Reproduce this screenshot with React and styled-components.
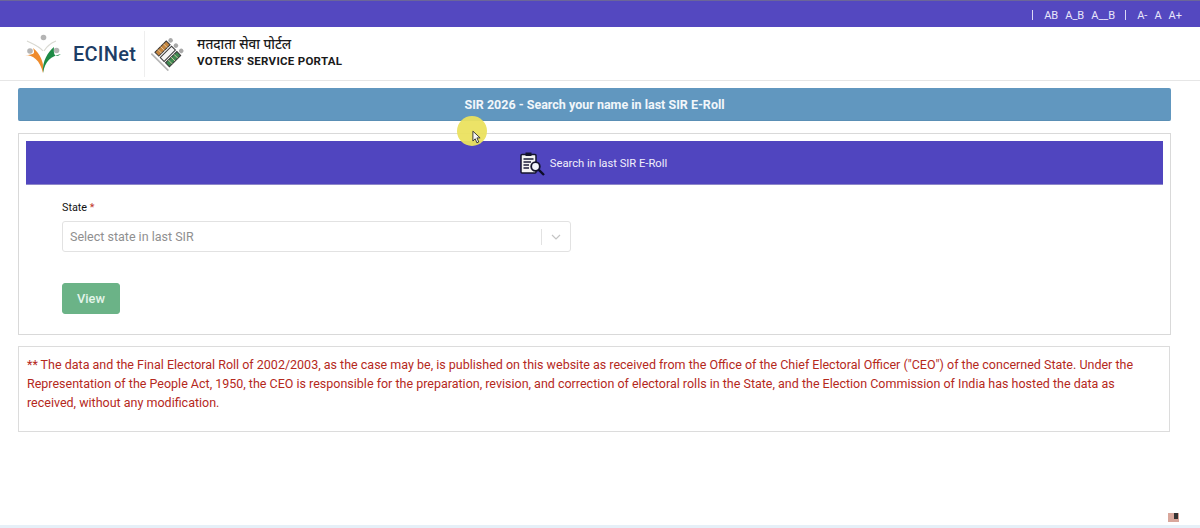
import React from "react"
import styled, { createGlobalStyle } from "styled-components"

const Global = createGlobalStyle`
  html, body { margin: 0; padding: 0; background: #fff; }
  body { font-family: Roboto, "Liberation Sans", sans-serif; overflow: hidden; }
  * { box-sizing: border-box; }
`

const Page = styled.div`
  position: relative;
  width: 1200px;
  height: 528px;
  overflow: hidden;
  background: #fff;
  display: flex;
  flex-direction: column;
`

const TopBar = styled.div`
  height: 27px;
  flex: none;
  background: #5448c0;
  border-top: 1px solid #6b6699;
  display: flex;
  align-items: center;
  justify-content: flex-end;
  padding: 2px 18px 0 0;
  color: #e8e6fa;
  font-size: 11px;
`

const BarSep = styled.span`
  width: 1px;
  height: 10px;
  background: #dcd9f5;
  margin: ${props => props.margin};
`

const BarItem = styled.span`
  margin-left: ${props => props.gap || 0}px;
  white-space: pre;
`

const Header = styled.header`
  height: 54px;
  flex: none;
  display: flex;
  align-items: center;
  border-bottom: 1px solid #e6e6e6;
  padding-left: 25px;
`

const BrandName = styled.span`
  font-size: 20px;
  font-weight: 500;
  letter-spacing: 0.25px;
  color: #1d3d66;
  margin-left: 10px;
`

const HeaderDivider = styled.span`
  width: 1px;
  height: 46px;
  background: #eeeeee;
  margin: 0 6px 0 8px;
`

const PortalText = styled.div`
  margin-left: 12px;
  padding-bottom: 3px;
  display: flex;
  flex-direction: column;
  gap: 2px;
  color: #1a1a1a;
`

const PortalHindi = styled.span`
  font-family: "Noto Sans", "Noto Sans Devanagari", "Lohit Devanagari", sans-serif;
  font-size: 13.5px;
  font-weight: 500;
  line-height: 16px;
`

const PortalEnglish = styled.span`
  font-size: 11.5px;
  font-weight: 700;
  letter-spacing: 0.27px;
  line-height: 14px;
`

const Content = styled.main`
  padding: 7px 29px 0 18px;
  display: flex;
  flex-direction: column;
`

const TitleBar = styled.div`
  height: 33px;
  background: #6197bf;
  border-radius: 2px;
  display: flex;
  align-items: center;
  justify-content: center;
  color: #f1f6fa;
  font-size: 12.5px;
  font-weight: 700;
  border-bottom: 1px solid #5a8fb5;
`

const Card = styled.section`
  margin-top: 12px;
  height: 202px;
  border: 1px solid #d9d9d9;
  padding: 7px 7px 0;
`

const CardHead = styled.div`
  height: 44px;
  background: #5045bf;
  border-bottom: 1px solid #8d87c9;
  display: flex;
  align-items: center;
  justify-content: center;
  color: #f0effb;
  font-size: 11.2px;
  font-weight: 400;
  gap: 5px;
  padding: 2px 2px 0 0;
`

const FormArea = styled.div`
  padding: 16px 0 0 36px;
`

const Label = styled.div`
  font-size: 10.8px;
  font-weight: 400;
  line-height: 14px;
  color: #111;
`

const Req = styled.span`
  color: #c0392b;
`

const SelectBox = styled.div`
  margin-top: 6px;
  width: 509px;
  height: 31px;
  border: 1px solid #e2e2e2;
  border-radius: 3px;
  display: flex;
  align-items: center;
  padding-left: 7px;
  color: #8f8f8f;
  font-size: 12.5px;
`

const SelectValue = styled.span`
  flex: 1;
`

const SelectSep = styled.span`
  width: 1px;
  height: 16px;
  background: #e2e2e2;
`

const SelectArrow = styled.span`
  width: 28px;
  display: flex;
  align-items: center;
  justify-content: center;
`

const ViewButton = styled.button`
  display: block;
  margin-top: 31px;
  width: 58px;
  height: 31px;
  border: 1px solid #6bb387;
  border-radius: 3px;
  background: #6bb387;
  color: #e4f5ea;
  font-family: inherit;
  font-size: 12.8px;
  font-weight: 500;
  padding: 0;
`

const Note = styled.section`
  margin-top: 11px;
  margin-right: 1px;
  height: 86px;
  border: 1px solid #dcdcdc;
  padding: 8px 8px 0;
  color: #b5291c;
  font-size: 12.5px;
  line-height: 19px;
`

const Cursor = styled.div`
  position: absolute;
  left: 457px;
  top: 116px;
  width: 30px;
  height: 30px;
  border-radius: 50%;
  background: #ebe25f;
  opacity: 0.95;
`

const CursorArrow = styled.svg`
  position: absolute;
  left: 15px;
  top: 14px;
`

const BottomStrip = styled.div`
  position: absolute;
  left: 0;
  right: 0;
  bottom: 0;
  height: 3px;
  background: #e6f0f8;
`

const TrayIcon = styled.svg`
  position: absolute;
  left: 1168px;
  top: 513px;
`

const EciNetLogo = () => (
  <svg width="38" height="40" viewBox="0 0 38 40">
    <circle cx="18.500" cy="3.500" r="2.800" fill="#b4b4b4" />
    <circle cx="5" cy="17" r="2.800" fill="#b4b4b4" />
    <circle cx="31.500" cy="16.500" r="2.800" fill="#b4b4b4" />
    <path d="M2 7 C8 10 14 12 18 17" stroke="#d9d9d2" strokeWidth="1.200" fill="none" />
    <path d="M31 7 C26 9 22 12 19 17" stroke="#d9d9d2" strokeWidth="1.200" fill="none" />
    <path d="M0 21 C8 21 15 26 18 39 C20 30 15 19 8 14 C10 19 10 21 0 21Z" fill="#ee8b2c" />
    <path d="M18 39 C20 27 26 22 36 20 C31 24 28 22 29 13 C23 18 17 27 18 39Z" fill="#1d8a45" />
  </svg>
)

const EciMark = () => (
  <svg width="34" height="34" viewBox="0 0 34 34">
    <g transform="rotate(45 17 17)">
      <rect x="6.500" y="9" width="5.500" height="16" fill="#c4853f" stroke="#3a3a3a" strokeWidth="1" />
      <rect x="14" y="9" width="5.500" height="16" fill="#f5f5f5" stroke="#3a3a3a" strokeWidth="1" />
      <rect x="21.500" y="9" width="5.500" height="16" fill="#3f8a52" stroke="#3a3a3a" strokeWidth="1" />
      <path d="M6.500 13H12M6.500 17H12M6.500 21H12M21.500 13H27M21.500 17H27M21.500 21H27" stroke="#e6d2b0" strokeWidth="0.800" />
      <circle cx="9.200" cy="5.500" r="2.300" fill="#a9a9a9" />
      <circle cx="16.700" cy="5.500" r="2.300" fill="#a9a9a9" />
      <circle cx="24.200" cy="5.500" r="2.300" fill="#a9a9a9" />
      <path d="M5 28.500H29" stroke="#b5b5b5" strokeWidth="1.600" />
    </g>
  </svg>
)

const SearchDocIcon = () => (
  <svg width="25" height="24" viewBox="0 0 25 24">
    <rect x="1" y="2.500" width="15" height="18.500" rx="1" fill="#f4f4f4" stroke="#14142e" strokeWidth="1.500" />
    <rect x="5.500" y="0.500" width="6" height="3.500" fill="#14142e" />
    <path d="M3.500 7H13.500M3.500 10H11M3.500 13H9M3.500 16H9" stroke="#1c1c3a" strokeWidth="1.300" />
    <circle cx="15.500" cy="14.500" r="4.300" fill="#f2f4fb" stroke="#14142e" strokeWidth="1.800" />
    <path d="M18.800 17.800L24 23" stroke="#0d0d28" strokeWidth="2.400" />
  </svg>
)

const App = () => (
  <Page>
    <Global />
    <TopBar>
      <BarSep margin="0 11px 0 0" />
      <BarItem>AB</BarItem>
      <BarItem gap={7}>A_B</BarItem>
      <BarItem gap={7}>A__B</BarItem>
      <BarSep margin="0 11px 0 10px" />
      <BarItem>A-</BarItem>
      <BarItem gap={7}>A</BarItem>
      <BarItem gap={7}>A+</BarItem>
    </TopBar>
    <Header>
      <EciNetLogo />
      <BrandName>ECINet</BrandName>
      <HeaderDivider />
      <EciMark />
      <PortalText>
        <PortalHindi lang="hi">मतदाता सेवा पोर्टल</PortalHindi>
        <PortalEnglish>VOTERS' SERVICE PORTAL</PortalEnglish>
      </PortalText>
    </Header>
    <Content>
      <TitleBar>SIR 2026 - Search your name in last SIR E-Roll</TitleBar>
      <Card>
        <CardHead>
          <SearchDocIcon />
          <span>Search in last SIR E-Roll</span>
        </CardHead>
        <FormArea>
          <Label>
            State <Req>*</Req>
          </Label>
          <SelectBox>
            <SelectValue>Select state in last SIR</SelectValue>
            <SelectSep />
            <SelectArrow>
              <svg width="10" height="6" viewBox="0 0 10 6">
                <path d="M1 1L5 5L9 1" stroke="#c4c4c4" strokeWidth="1.200" fill="none" />
              </svg>
            </SelectArrow>
          </SelectBox>
          <ViewButton>View</ViewButton>
        </FormArea>
      </Card>
      <Note>
        ** The data and the Final Electoral Roll of 2002/2003, as the case may be, is published on this website as received from the Office of the Chief Electoral Officer ("CEO") of the concerned State. Under the Representation of the People Act, 1950, the CEO is responsible for the preparation, revision, and correction of electoral rolls in the State, and the Election Commission of India has hosted the data as received, without any modification.
      </Note>
    </Content>
    <Cursor>
      <CursorArrow width="9" height="14" viewBox="0 0 10 15">
        <path d="M1 1V12L3.500 9.500L5.500 14L7.500 13L5.500 8.500H9Z" fill="#f5f5f5" stroke="#222" strokeWidth="1" />
      </CursorArrow>
    </Cursor>
    <TrayIcon width="11" height="9" viewBox="0 0 11 9">
      <rect width="11" height="9" fill="#d9a79c" />
      <path d="M6 0H10V6H6Z" fill="#333" />
    </TrayIcon>
    <BottomStrip />
  </Page>
)

export default App
